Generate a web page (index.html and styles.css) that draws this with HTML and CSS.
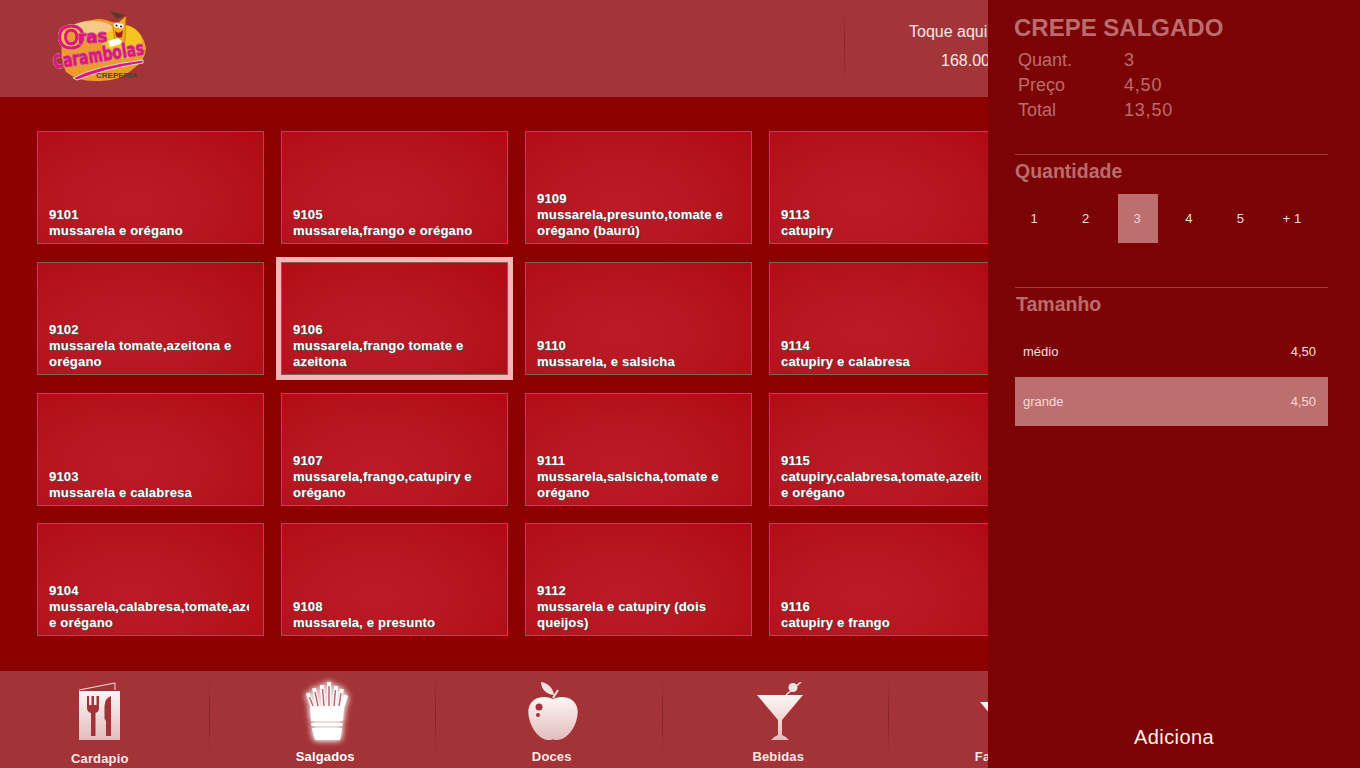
FILE: index.html
```html
<!DOCTYPE html>
<html lang="pt-BR">
<head>
  <meta charset="UTF-8">
  <title>Oras Carambolas</title>
  <link rel="stylesheet" href="styles.css">
</head>
<body>
  <svg class="defs" width="0" height="0">
    <defs>
      <linearGradient id="fade" x1="0" y1="0" x2="0" y2="1">
        <stop offset="0" stop-color="#fdf6f6"/>
        <stop offset="1" stop-color="#e3bcbd"/>
      </linearGradient>
    </defs>
  </svg>

  <header class="topo">
    <svg class="logo" viewBox="50 8 100 76" width="100" height="76">
      <path d="M62 40 Q72 22 92 20 Q100 17 112 22 L130 26 Q143 32 146 48 Q146 60 132 70 Q118 82 98 81 Q78 82 66 72 Q60 60 62 40 Z" fill="#ef9a2a"/>
      <ellipse cx="122" cy="42" rx="20" ry="17" fill="#f8c41f"/>
      <ellipse cx="92" cy="28" rx="20" ry="7" fill="#f6c98a"/>
      <path d="M113 27 L126 16 L125 42 L115 42 Z" fill="#f5a818" stroke="#b5641a" stroke-width=".6"/>
      <path d="M109 11 L126 15 L117 19 Z" fill="#5a3a28"/>
      <circle cx="116.500" cy="25" r="2.600" fill="#fff"/><circle cx="121" cy="26" r="2.600" fill="#fff"/>
      <circle cx="116.500" cy="25.500" r="1.100" fill="#223"/><circle cx="121" cy="26.500" r="1.100" fill="#223"/>
      <path d="M115 31 Q119 35 123 30 L122 37 Q118 39 116 36 Z" fill="#a3201a"/>
      <path d="M108 41 L118 38 L124 43 L110 47 Z" fill="#fff"/>
      <text class="logo-txt logo-o" x="58" y="48">O</text>
      <text class="logo-txt logo-ras" x="78" y="44" transform="rotate(-4 78 44)">ras</text>
      <text class="logo-txt logo-car" x="54" y="69" transform="rotate(-9 54 69)" textLength="92" lengthAdjust="spacingAndGlyphs">Carambolas</text>
      <path d="M73 78 Q95 66 143 60 L143 63 Q104 69 77 80 Z" fill="#e2127e" stroke="#c9e8c8" stroke-width="1"/>
      <text class="logo-sub" x="96" y="78">CREPERIA</text>
    </svg>
    <div class="status">
      <div class="status-linha">Toque aqui</div>
      <div class="status-valor">168.00</div>
    </div>
  </header>

  <main class="grade">
    <div class="prato"><div class="prato-txt"><b>9101</b>mussarela e orégano</div></div>
    <div class="prato"><div class="prato-txt"><b>9105</b>mussarela,frango e orégano</div></div>
    <div class="prato"><div class="prato-txt"><b>9109</b>mussarela,presunto,tomate e orégano (baurú)</div></div>
    <div class="prato"><div class="prato-txt"><b>9113</b>catupiry</div></div>

    <div class="prato"><div class="prato-txt"><b>9102</b>mussarela tomate,azeitona e orégano</div></div>
    <div class="prato ativo"><div class="prato-txt"><b>9106</b>mussarela,frango tomate e azeitona</div></div>
    <div class="prato"><div class="prato-txt"><b>9110</b>mussarela, e salsicha</div></div>
    <div class="prato"><div class="prato-txt"><b>9114</b>catupiry e calabresa</div></div>

    <div class="prato"><div class="prato-txt"><b>9103</b>mussarela e calabresa</div></div>
    <div class="prato"><div class="prato-txt"><b>9107</b>mussarela,frango,catupiry e orégano</div></div>
    <div class="prato"><div class="prato-txt"><b>9111</b>mussarela,salsicha,tomate e orégano</div></div>
    <div class="prato"><div class="prato-txt"><b>9115</b>catupiry,calabresa,tomate,azeitona e orégano</div></div>

    <div class="prato"><div class="prato-txt"><b>9104</b>mussarela,calabresa,tomate,azeitona e orégano</div></div>
    <div class="prato"><div class="prato-txt"><b>9108</b>mussarela, e presunto</div></div>
    <div class="prato"><div class="prato-txt"><b>9112</b>mussarela e catupiry (dois queijos)</div></div>
    <div class="prato"><div class="prato-txt"><b>9116</b>catupiry e frango</div></div>
  </main>

  <nav class="menu">
    <div class="menu-item cardapio">
      <svg class="icone" viewBox="0 0 42 58" width="42" height="58">
        <path d="M0 8 L36 1 L36 8" fill="none" stroke="#f4e2e2" stroke-width="1"/>
        <rect x="0" y="9" width="41" height="49" fill="url(#fade)"/>
        <path d="M8 14 H10 V23 H12.500 V14 H15 V23 H17.500 V14 H20 V26 Q20 30 16.500 31 V54 H12 V31 Q8 30 8 26 Z" fill="#a33336"/>
        <path d="M32 14 V54 H27 V39 L25.500 37 V24 Q26 16 32 14 Z" fill="#a33336"/>
      </svg>
      <span>Cardapio</span>
    </div>
    <div class="menu-item selecionado">
      <svg class="icone" viewBox="0 0 42 58" width="42" height="58">
        <g stroke="#fff" stroke-width="4" stroke-linecap="square">
          <path d="M7 25 L2.500 13"/><path d="M12 25 L8.500 8"/><path d="M18 25 L16 5"/>
          <path d="M23 25 L23 2"/><path d="M28 25 L30 6"/><path d="M33 25 L35.500 9"/><path d="M36 26 L39.500 15"/>
        </g>
        <g stroke="#b8676a" stroke-width="1.500">
          <path d="M7 24 L3.500 15"/><path d="M12 24 L9 10"/><path d="M18 24 L16.500 7"/>
          <path d="M23 24 L23 4"/><path d="M28 24 L29.500 8"/><path d="M33 24 L35 11"/>
        </g>
        <path d="M4 25 H38 L37 39 H5 Z M5.200 41 H36.800 L36.500 44 H5.500 Z M5.700 46 H36.300 L34 58 H9 Z" fill="#fff"/>
      </svg>
      <span>Salgados</span>
    </div>
    <div class="menu-item">
      <svg class="icone" viewBox="0 0 50 58" width="50" height="58">
        <path d="M25 17 C17 13 3 14 0.500 27 C-1 40 9 58 21 58 C23 58 24 57.500 25 57.500 C26 57.500 27 58 29 58 C41 58 51 41 49.500 27 C47 14 33 13 25 17 Z" fill="url(#fade)"/>
        <path d="M13 0 C20 1 25 6 26 13 C20 13 13 8 13 0 Z" fill="#f4e2e2"/>
        <path d="M25 16 L30 8" stroke="#f4e2e2" stroke-width="2"/>
        <circle cx="11" cy="25" r="3.500" fill="#a33336"/>
        <circle cx="10" cy="33" r="2" fill="#a33336"/>
      </svg>
      <span>Doces</span>
    </div>
    <div class="menu-item">
      <svg class="icone" viewBox="0 0 46 58" width="46" height="58">
        <path d="M29 13 L44 0" stroke="#f4e2e2" stroke-width="1.500"/>
        <circle cx="36" cy="5.500" r="4.500" fill="#f4e2e2"/>
        <path d="M0 13 H46 L25 38 V53 Q30 55 32 58 H14 Q16 55 21 53 V38 Z" fill="url(#fade)"/>
      </svg>
      <span>Bebidas</span>
    </div>
    <div class="menu-item">
      <svg class="icone" viewBox="0 0 52 58" width="52" height="58">
        <path d="M0 20 H52 L30 46 H22 Z" fill="url(#fade)"/>
      </svg>
      <span>Favoritos</span>
    </div>
  </nav>

  <aside class="painel">
    <h1 class="painel-titulo">CREPE SALGADO</h1>
    <div class="resumo">
      <span>Quant.</span><span class="num">3</span>
      <span>Preço</span><span class="num">4,50</span>
      <span>Total</span><span class="num">13,50</span>
    </div>

    <section class="bloco bloco-qtd">
      <h2>Quantidade</h2>
      <div class="qtd">
        <div>1</div>
        <div>2</div>
        <div class="marcado">3</div>
        <div>4</div>
        <div>5</div>
        <div>+ 1</div>
      </div>
    </section>

    <section class="bloco bloco-tam">
      <h2>Tamanho</h2>
      <div class="tam primeiro"><span>médio</span><span>4,50</span></div>
      <div class="tam marcado"><span>grande</span><span>4,50</span></div>
    </section>

    <div class="adiciona">Adiciona</div>
  </aside>
</body>
</html>
```

FILE: styles.css
```css
html, body {
  margin: 0;
  height: 100%;
  overflow: hidden;
}
body {
  font-family: "Liberation Sans", Arial, sans-serif;
  background-color: #8c0000;
  color: #fff;
  display: flex;
  flex-direction: column;
  position: relative;
}
.defs {
  display: block;
  height: 0;
}
.topo {
  flex: 0 0 97px;
  background-color: #a33538;
  display: flex;
  box-sizing: border-box;
  padding: 0 0 0 50px;
}
.logo {
  margin-top: 8px;
}
.status {
  margin-left: 694px;
  margin-top: 8px;
  height: 78px;
  width: 300px;
  padding: 10px 0 0 64px;
  box-sizing: border-box;
  font-size: 16px;
  line-height: 28px;
  color: #f8e6e6;
  border-left: 1px solid;
  border-image: linear-gradient(transparent, #8a2528, transparent) 1;
}
.status-valor {
  padding: 1px 0 0 32px;
}
.logo-txt {
  fill: #e2127e;
  stroke: #e2127e;
  filter: drop-shadow(0 0 .6px #8fe6b4) drop-shadow(0 0 .4px #8fe6b4);
}
.logo-o {
  font: bold 31px "DejaVu Sans", sans-serif;
  fill: #f2c04a;
  stroke-width: 3;
}
.logo-ras {
  font: bold 17px "DejaVu Sans", sans-serif;
  stroke-width: .9;
}
.logo-car {
  font: bold 20px "DejaVu Sans", sans-serif;
  stroke-width: 1;
}
.logo-sub {
  font: bold 8px "Liberation Sans", sans-serif;
  fill: #3d4a30;
}

.grade {
  flex: 1;
  display: grid;
  grid-template-columns: repeat(4, 227px);
  grid-template-rows: repeat(4, 113px);
  gap: 17.8px 17px;
  padding: 34px 0 0 37px;
  overflow: hidden;
}
.prato {
  box-sizing: border-box;
  border: 1px solid #7e5f62;
  background: radial-gradient(ellipse 75% 90% at 42% 65%, #ba1b26 0%, #b51620 50%, #b20a14 100%);
  display: flex;
  align-items: flex-end;
  padding: 0 0 4px 11px;
}
.prato.ativo {
  outline: 5px solid #fbb5b5;
}
.prato-txt {
  width: 200px;
  overflow: hidden;
  font-size: 13px;
  font-weight: bold;
  letter-spacing: .2px;
  line-height: 16px;
  color: #fff;
  text-shadow: 1px 1px 0 #555;
}
.prato-txt b {
  display: block;
}

.menu {
  flex: 0 0 97px;
  background-color: #a33336;
  display: flex;
  margin-left: -17px;
  overflow: hidden;
}
.menu-item {
  flex: 0 0 226.5px;
  box-sizing: border-box;
  padding: 11px 0 0 6px;
  display: flex;
  flex-direction: column;
  align-items: center;
  font-size: 13px;
  font-weight: bold;
  letter-spacing: .15px;
  color: #f7e6e6;
  border-right: 1px solid;
  border-image: linear-gradient(transparent 8%, #82202a 45%, transparent 85%) 1;
}
.menu-item span {
  margin-top: 9px;
  line-height: 16px;
}
.icone {
  display: block;
  margin-left: 3px;
}
.menu-item.cardapio span {
  margin: 11px 0 0 2px;
}
.selecionado {
  color: #fff;
}
.selecionado .icone {
  filter: drop-shadow(0 0 3px #fff) drop-shadow(0 0 2px #ffffff88);
}

.painel {
  position: absolute;
  top: 0;
  right: 0;
  bottom: 0;
  width: 372px;
  box-sizing: border-box;
  background-color: #7c0303;
  padding: 15px 32px 0 27px;
  display: flex;
  flex-direction: column;
  color: #bb6c6e;
}
.painel-titulo {
  margin: 0 0 0 -1px;
  font-size: 24px;
  line-height: 26px;
}
.resumo {
  display: grid;
  grid-template-columns: 106px auto;
  padding: 6.500px 0 0 3px;
  font-size: 18px;
  line-height: 25px;
}
.resumo .num {
  letter-spacing: .8px;
}
.bloco {
  border-top: 1px solid #a23b3d;
}
.bloco h2 {
  margin: 0;
  font-size: 19.500px;
  line-height: 22px;
}
.bloco-qtd {
  margin-top: 31.500px;
  padding-top: 5px;
}
.bloco-tam {
  margin-top: 44px;
  padding-top: 5px;
}
.bloco-tam h2 {
  padding-left: 1px;
}
.qtd {
  display: flex;
  gap: 11.6px;
  margin-top: 12px;
}
.qtd div {
  box-sizing: border-box;
  width: 40px;
  height: 49px;
  padding-right: 2px;
  display: flex;
  align-items: center;
  justify-content: center;
  font-size: 13px;
  color: #f5dede;
}
.qtd .marcado {
  background-color: #bd6f70;
  color: #f2d3d3;
}
.tam {
  height: 49px;
  box-sizing: border-box;
  display: flex;
  align-items: center;
  justify-content: space-between;
  padding: 0 12px 0 8px;
  font-size: 13px;
  color: #f5dede;
}
.tam.primeiro {
  margin-top: 13px;
  padding-bottom: 3px;
}
.tam.marcado {
  background-color: #bd6f70;
  color: #f6d9d9;
}
.adiciona {
  margin-top: auto;
  padding-bottom: 19px;
  padding-left: 5px;
  text-align: center;
  font-size: 20px;
  letter-spacing: .4px;
  line-height: 24px;
  color: #fbeeee;
}
```
